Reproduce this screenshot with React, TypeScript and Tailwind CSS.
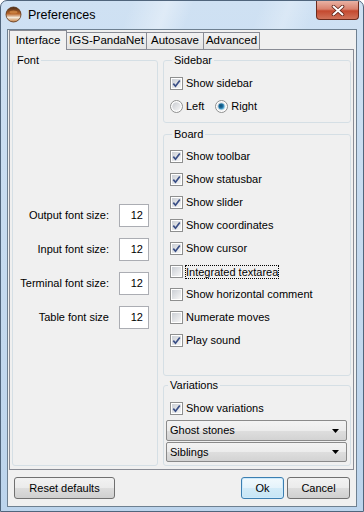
import type { ReactNode } from "react"

const Check = ({ checked }: { checked: boolean }) => (
  <span className="flex h-[13px] w-[13px] shrink-0 border border-[#8e8f8f] bg-white p-[1px]">
    <span className="flex flex-1 items-center justify-center bg-[linear-gradient(135deg,#cbcfd5,#f6f6f6)]">
      {checked && (
        <svg width="9" height="9" viewBox="0 0 9 9">
          <path d="M1.3 4.6 L3.5 7.2 L7.8 1.4" fill="none" stroke="#3a4f86" strokeWidth="1.7" />
        </svg>
      )}
    </span>
  </span>
)

const Radio = ({ checked }: { checked: boolean }) => (
  <svg width="13" height="13" viewBox="0 0 13 13" className="shrink-0">
    <defs>
      <linearGradient id="rb" x1="0" y1="0" x2="1" y2="1">
        <stop offset="0" stopColor="#c9ccd1" />
        <stop offset="1" stopColor="#f7f7f7" />
      </linearGradient>
      <radialGradient id="rd" cx="0.4" cy="0.4" r="0.6">
        <stop offset="0" stopColor="#0d4a72" />
        <stop offset="0.55" stopColor="#1d6fa0" />
        <stop offset="1" stopColor="#7cc4e6" />
      </radialGradient>
    </defs>
    <circle cx="6.5" cy="6.5" r="6" fill="#fff" stroke="#8e8f8f" />
    <circle cx="6.5" cy="6.5" r="4.3" fill="url(#rb)" />
    {checked && <circle cx="6.5" cy="6.5" r="3.2" fill="url(#rd)" />}
  </svg>
)

const CheckRow = ({ checked, children }: { checked: boolean; children: ReactNode }) => (
  <div className="flex h-[23px] items-center gap-[3px]">
    <Check checked={checked} />
    {children}
  </div>
)

const Group = ({ title, className, children }: { title: string; className: string; children: ReactNode }) => (
  <fieldset className={`rounded-[3px] border border-[#d5dfe5] ${className}`}>
    <legend className="ml-[2px] px-[2px] leading-[13px]">{title}</legend>
    {children}
  </fieldset>
)

const SizeRow = ({ label }: { label: string }) => (
  <div className="flex h-[23px] items-center">
    <span className="w-[96px] text-right">{label}</span>
    <span className="ml-[10px] flex h-[23px] w-[30px] items-center justify-end border border-[#abadb3] bg-white pr-[5px]">
      12
    </span>
  </div>
)

const Combo = ({ text, h }: { text: string; h: string }) => (
  <div
    className={`flex ${h} items-center justify-between rounded-[2px] border border-[#8a8a8a] bg-[linear-gradient(to_bottom,#f3f3f3_0%,#ececec_50%,#dedede_51%,#d3d3d3_100%)] pl-[3px] pr-[7px]`}
  >
    <span>{text}</span>
    <svg width="7" height="4" viewBox="0 0 7 4">
      <path d="M0 0 H7 L3.5 4 Z" fill="#000" />
    </svg>
  </div>
)

const Tab = ({ label, active, w }: { label: string; active?: boolean; w: string }) =>
  active ? (
    <div className={`relative z-10 -mb-[1px] flex h-[20px] ${w} items-center justify-center whitespace-nowrap border border-b-0 border-[#898c95] bg-[#f0f0f0] text-[11.5px]`}>
      {label}
    </div>
  ) : (
    <div className={`flex h-[17px] ${w} items-center justify-center whitespace-nowrap border border-b-0 border-l-0 border-[#898c95] bg-[linear-gradient(to_bottom,#f2f2f2,#e3e3e3)] text-[11.5px]`}>
      {label}
    </div>
  )

export default function App() {
  return (
    <div className="flex h-[512px] w-[364px] flex-col overflow-hidden rounded-t-[7px] border border-[#50657c] bg-[linear-gradient(to_bottom,#cfe1f3,#bcd4ec)] font-['Liberation_Sans',Arial,sans-serif] text-[11px] text-black">
      {/* title bar */}
      <div className="flex h-[28px] shrink-0 items-start bg-[linear-gradient(110deg,transparent_35%,rgba(255,255,255,0.35)_45%,transparent_52%,transparent_70%,rgba(255,255,255,0.25)_78%,transparent_85%)]">
        <svg width="17" height="17" viewBox="0 0 17 17" className="ml-[4px] mt-[5px]">
          <defs>
            <linearGradient id="ic" x1="0" y1="0" x2="0" y2="1">
              <stop offset="0" stopColor="#4a2a14" />
              <stop offset="0.45" stopColor="#b8652a" />
              <stop offset="0.7" stopColor="#f2e6d6" />
              <stop offset="1" stopColor="#c27a3c" />
            </linearGradient>
          </defs>
          <circle cx="8.5" cy="8.5" r="7.5" fill="url(#ic)" stroke="#5a3416" strokeWidth="0.8" />
          <ellipse cx="8.5" cy="6" rx="4" ry="1.6" fill="#d98f4a" opacity="0.7" />
        </svg>
        <span className="ml-[6px] mt-[7px] text-[12.5px] leading-[14px]">Preferences</span>
        <div className="ml-auto mr-[4px] flex h-[19px] w-[43px] items-center justify-center rounded-b-[4px] border border-t-0 border-[#6b2b1d] bg-[linear-gradient(to_bottom,#e9b2a4_0%,#d9826e_45%,#c4492f_55%,#d0735a_100%)]">
          <svg width="14" height="11" viewBox="0 0 14 11">
            <path d="M2.5 1.5 L11.5 9.5 M11.5 1.5 L2.5 9.5" stroke="#5b2015" strokeWidth="3.6" strokeLinecap="round" />
            <path d="M2.5 1.5 L11.5 9.5 M11.5 1.5 L2.5 9.5" stroke="#fff" strokeWidth="2" strokeLinecap="round" />
          </svg>
        </div>
      </div>

      {/* client area */}
      <div className="mx-[6px] mb-[4px] flex flex-1 flex-col border border-[#6e8091] bg-[#f0f0f0]">
        <div className="flex h-[19px] items-end pl-[1px]">
          <Tab label="Interface" active w="w-[58px]" />
          <Tab label="IGS-PandaNet" w="w-[80px]" />
          <Tab label="Autosave" w="w-[57px]" />
          <Tab label="Advanced" w="w-[56px]" />
        </div>

        <div className="ml-[1px] mr-[2px] flex h-[421px] gap-[5px] border border-[#898c95] bg-[#f0f0f0] pb-[3px] pl-[2px] pr-[2px] pt-[4px]">
          <Group title="Font" className="flex h-[412px] w-[146px] flex-col">
            <div className="flex flex-1 flex-col justify-center gap-[11px]">
              <SizeRow label="Output font size:" />
              <SizeRow label="Input font size:" />
              <SizeRow label="Terminal font size:" />
              <SizeRow label="Table font size" />
            </div>
          </Group>

          <div className="flex w-[188px] flex-col">
            <Group title="Sidebar" className="h-[69px] pl-[6px] pt-[5px]">
              <CheckRow checked>Show sidebar</CheckRow>
              <div className="flex h-[23px] items-center">
                <Radio checked={false} />
                <span className="ml-[3px]">Left</span>
                <span className="ml-[11px]">
                  <Radio checked />
                </span>
                <span className="ml-[3px]">Right</span>
              </div>
            </Group>

            <Group title="Board" className="mt-[5px] h-[248px] pl-[6px] pt-[4px]">
              <CheckRow checked>Show toolbar</CheckRow>
              <CheckRow checked>Show statusbar</CheckRow>
              <CheckRow checked>Show slider</CheckRow>
              <CheckRow checked>Show coordinates</CheckRow>
              <CheckRow checked>Show cursor</CheckRow>
              <CheckRow checked={false}>
                <span className="leading-[12px] outline-1 outline-dotted outline-black">Integrated textarea</span>
              </CheckRow>
              <CheckRow checked={false}>Show horizontal comment</CheckRow>
              <CheckRow checked={false}>Numerate moves</CheckRow>
              <CheckRow checked>Play sound</CheckRow>
            </Group>

            <Group title="Variations" className="mt-[3px] h-[87px] pl-[2px] pr-[3px] pt-[5px]">
              <div className="pl-[4px]">
                <CheckRow checked>Show variations</CheckRow>
              </div>
              <div className="flex flex-col gap-[1px]">
                <Combo text="Ghost stones" h="h-[21px]" />
                <Combo text="Siblings" h="h-[20px]" />
              </div>
            </Group>
          </div>
        </div>

        <div className="mt-[7px] flex items-center px-[6px]">
          <button
            type="button"
            className="h-[22px] w-[101px] rounded-[3px] border border-[#707070] bg-[linear-gradient(to_bottom,#f2f2f2_0%,#ebebeb_50%,#dddddd_51%,#cfcfcf_100%)] text-[11px]"
          >
            Reset defaults
          </button>
          <button
            type="button"
            className="ml-auto h-[22px] w-[43px] rounded-[3px] border border-[#3c7fb1] bg-[linear-gradient(to_bottom,#f1f9fd_0%,#e4f3fb_50%,#d2ebf8_51%,#c7e5f5_100%)] text-[11px] shadow-[inset_0_0_0_1px_#cdeafc]"
          >
            Ok
          </button>
          <button
            type="button"
            className="ml-[3px] h-[22px] w-[63px] rounded-[3px] border border-[#707070] bg-[linear-gradient(to_bottom,#f2f2f2_0%,#ebebeb_50%,#dddddd_51%,#cfcfcf_100%)] text-[11px]"
          >
            Cancel
          </button>
        </div>
      </div>
    </div>
  )
}
